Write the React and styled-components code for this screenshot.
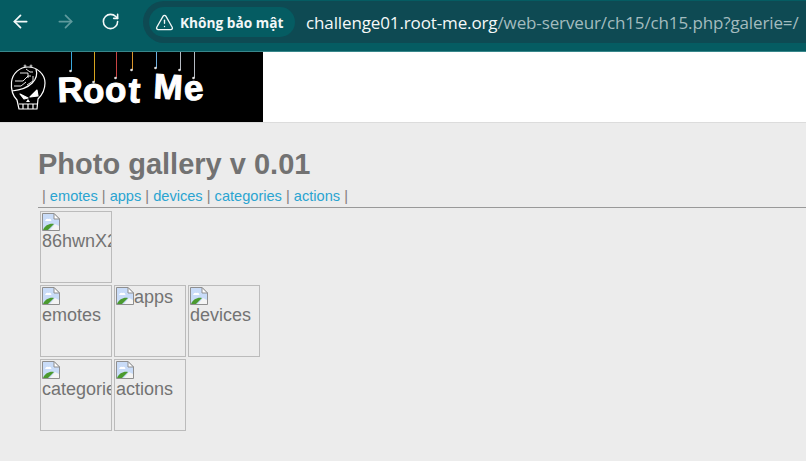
import styled, { createGlobalStyle } from 'styled-components'
import { ArrowLeft, ArrowRight, RotateCw, TriangleAlert } from 'lucide-react'

const GlobalStyle = createGlobalStyle`
    html, body {
        margin: 0;
        height: 100%;
        overflow: hidden;
        background: #ececec;
    }
`;

const Toolbar = styled.div`
    display: flex;
    align-items: flex-start;
    height: 50px;
    padding-top: 1px;
    background: #055c62;
    border-bottom: 1px solid #38878b;
`;

const NavButtons = styled.div`
    display: flex;
    align-items: center;
    height: 40px;
    width: 143px;
    padding-left: 7px;
    gap: 19px;
    box-sizing: border-box;
    color: #fff;
`;

const NavButton = styled.span`
    display: flex;
    width: 26px;
    justify-content: center;
    color: ${(p) => (p.$disabled ? '#5f9a9d' : '#f4f9f9')};
`;

const Omnibox = styled.div`
    flex: 1;
    display: flex;
    align-items: center;
    height: 42px;
    padding-left: 6px;
    border-radius: 21px 0 0 21px;
    background: #0e4a53;
`;

const SecurityChip = styled.div`
    display: flex;
    align-items: center;
    gap: 6px;
    width: 146px;
    height: 30px;
    padding-left: 6px;
    box-sizing: border-box;
    border-radius: 15px;
    background: #055c62;
    color: #f2f7f7;
    font: 700 13.7px "Open Sans", sans-serif;
    white-space: nowrap;
`;

const Url = styled.div`
    margin-left: 11px;
    font: 400 17px "Open Sans", sans-serif;
    letter-spacing: -0.125px;
    white-space: nowrap;
    color: #a3bcbf;
`;

const Host = styled.span`
    color: #f5f9f9;
`;

const Banner = styled.header`
    height: 70px;
    background: #fff;
    border-bottom: 1px solid #dcdcdc;
`;

const LogoBox = styled.div`
    width: 263px;
    height: 70px;
    background: #000;
`;

const LogoArt = styled.svg`
    display: block;
`;

const LogoLetter = styled.text`
    font: 700 35px "Liberation Sans", Arial, sans-serif;
    fill: #fff;
    stroke: #fff;
    stroke-width: 1px;
`;

const Content = styled.main`
    padding: 24px 0 0 38px;
    font-family: "Liberation Sans", Arial, sans-serif;
    color: #737373;
`;

const Title = styled.h1`
    margin: 0;
    font-size: 29px;
    line-height: 34px;
    font-weight: 700;
    color: #727272;
`;

const Menu = styled.nav`
    height: 22px;
    margin-top: 4px;
    padding-left: 4px;
    font-size: 14.6px;
    line-height: 22px;
    border-bottom: 1px solid #999;
    color: #85807c;
    white-space: pre;
`;

const MenuLink = styled.a`
    color: #2aa4d1;
    text-decoration: none;
`;

const Gallery = styled.div`
    display: flex;
    flex-direction: column;
    gap: 2px;
    margin: 3px 0 0 2px;
`;

const Row = styled.div`
    display: flex;
    gap: 2px;
`;

const Thumb = styled.a`
    display: block;
    width: 72px;
    height: 72px;
    padding: 2px 1px 0;
    box-sizing: border-box;
    border: 1px solid #bbb;
    overflow: hidden;
    font-size: 18px;
    line-height: 18px;
    color: #737373;
    text-decoration: none;
`;

const BrokenIcon = styled.svg`
    display: inline-block;
    width: 18px;
    height: 18px;
    margin-top: -1px;
    vertical-align: top;
`;

const rows = [
    ['86hwnX2xq'],
    ['emotes', 'apps', 'devices'],
    ['categories', 'actions'],
]

const links = ['emotes', 'apps', 'devices', 'categories', 'actions']

const letters = [
    { c: 'R', x: 58, y: 50, r: -2 },
    { c: 'o', x: 83, y: 51, r: 0 },
    { c: 'o', x: 105, y: 50, r: 0 },
    { c: 't', x: 128, y: 50, r: 3 },
    { c: 'M', x: 153, y: 46, r: 3 },
    { c: 'e', x: 185, y: 49, r: -6 },
]

const strings = [
    { x: 71, h: 19, color: '#3aa8dc' },
    { x: 94, h: 30, color: '#d6a41f' },
    { x: 116, h: 26, color: '#c94444' },
    { x: 132, h: 18, color: '#d9952c' },
    { x: 156, h: 16, color: '#6fb0e0' },
    { x: 180, h: 18, color: '#b4bac2' },
    { x: 194, h: 26, color: '#b4bac2' },
]

function Skull () {
    return (
        <g fill="none" stroke="#fff" strokeWidth="1.2" strokeLinejoin="round">
            <path d="M17 48 C12 43 11 36 11.500 30 C12.500 21 20 15 28 15 C37 15 45 22 45 31 C45 38 42 43 38 47 L37 57 L19 57 Z" />
            <path d="M23 57 V52 M28 57 V52 M33 57 V52 M19 52 H37" />
            <path d="M36 17 C39 27 31 37 12 39" />
            <path d="M20 42 L28 46 L24 47 Z M37 38 L30 45 L38 44 Z" fill="#fff" />
            <path d="M26 50 L28 47 L30 50 Z" fill="#fff" stroke="none" />
            <path d="M15 29 H23 L28 24 H31 M14 34 H21 L26 30 M20 21 H28 V26 M26 17 L30 20 H33 M33 24 V29 L27 33" strokeWidth="0.9" />
            <circle cx="25" cy="14" r="1" strokeWidth="0.8" />
            <circle cx="31" cy="14" r="1" strokeWidth="0.8" />
        </g>
    )
}

function Logo () {
    return (
        <LogoArt width="263" height="70" viewBox="0 0 263 70">
            {strings.map((s) => (
                <g key={s.x}>
                    <line x1={s.x + 0.5} y1="0" x2={s.x + 0.5} y2={s.h} stroke={s.color} strokeWidth="1" />
                    <circle cx={s.x - 0.5} cy={s.h} r="1.3" fill="#ddd" />
                </g>
            ))}
            <Skull />
            {letters.map((l) => (
                <LogoLetter key={l.x} x={l.x} y={l.y} transform={`rotate(${l.r} ${l.x} ${l.y})`}>
                    {l.c}
                </LogoLetter>
            ))}
        </LogoArt>
    )
}

function Broken () {
    return (
        <BrokenIcon viewBox="0 0 18 18">
            <path d="M0.500 0.500 H12 L17.500 6 V17.500 H0.500 Z" fill="#c9dcf8" stroke="#8f8f8f" />
            <path d="M12 0.500 V6 H17.500 Z" fill="#fff" stroke="#8f8f8f" />
            <path d="M3 8 q1 -3 3.500 -2 q2.500 -1 3 2 Z" fill="#fff" />
            <path d="M1 17 C3 12 8 10 12 11 L6 17 Z" fill="#4b9a2f" />
            <path d="M13 11 L17 13 V17 H8 Z" fill="#f4f4f4" />
        </BrokenIcon>
    )
}

function App () {
    return (
        <>
            <GlobalStyle />
            <Toolbar>
                <NavButtons>
                    <NavButton><ArrowLeft size={21} strokeWidth={2} /></NavButton>
                    <NavButton $disabled><ArrowRight size={21} strokeWidth={2} /></NavButton>
                    <NavButton><RotateCw size={19} strokeWidth={2} /></NavButton>
                </NavButtons>
                <Omnibox>
                    <SecurityChip>
                        <TriangleAlert size={19} strokeWidth={1.7} />
                        Không bảo mật
                    </SecurityChip>
                    <Url><Host>challenge01.root-me.org</Host>/web-serveur/ch15/ch15.php?galerie=/</Url>
                </Omnibox>
            </Toolbar>
            <Banner>
                <LogoBox>
                    <Logo />
                </LogoBox>
            </Banner>
            <Content>
                <Title>Photo gallery v 0.01</Title>
                <Menu>
                    {'| '}
                    {links.map((name) => (
                        <span key={name}>
                            <MenuLink href="#">{name}</MenuLink>
                            {' | '}
                        </span>
                    ))}
                </Menu>
                <Gallery>
                    {rows.map((row) => (
                        <Row key={row[0]}>
                            {row.map((name) => (
                                <Thumb key={name} href="#">
                                    <Broken />{name}
                                </Thumb>
                            ))}
                        </Row>
                    ))}
                </Gallery>
            </Content>
        </>
    )
}

export default App
